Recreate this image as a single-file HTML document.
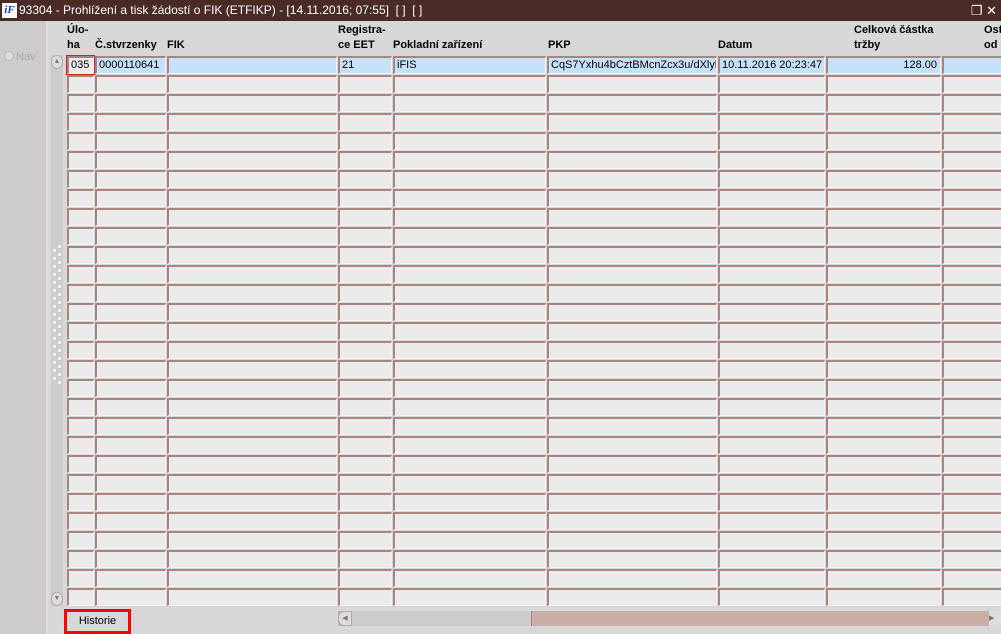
<!DOCTYPE html>
<html><head><meta charset="utf-8"><style>
*{margin:0;padding:0;box-sizing:border-box}
body{width:1001px;height:634px;overflow:hidden;background:#d8d8d8;font-family:"Liberation Sans",Arial,sans-serif;font-size:11px;position:relative}
.tb{position:absolute;left:0;top:0;width:1001px;height:21px;background:#4a2a26;color:#fff;font-size:12px;line-height:21px}
.tb .ic{position:absolute;left:2px;top:3px;width:15px;height:15px;background:#fff;color:#1a3cc8;font:italic bold 11px/15px "Liberation Serif",serif;text-align:center}
.tb .t{position:absolute;left:19px;top:0}
.lp{position:absolute;left:0;top:21px;width:48px;height:613px;background:#cccccc;border-right:2px solid #e8dcda}
.nav{position:absolute;left:4px;top:30px;color:#a8a8a8;font-size:11px}
.nav b{display:inline-block;width:10px;height:10px;border-radius:50%;border:1px solid #b8b8b8;background:#ddd;vertical-align:-1px;margin-right:2px}
.vs{position:absolute;left:51px;top:55px;width:12px;height:551px;background:#cccccc}
.vs .a{position:absolute;left:0;width:12px;height:14px;background:#ddd;border:1px solid #b8a8a4;border-radius:6px;font-size:7px;color:#777;text-align:center;line-height:12px}
.dots{position:absolute;left:2px;top:190px;width:8px;height:140px;background-image:radial-gradient(circle at 1.5px 1.5px,#fff 1.2px,transparent 1.6px),radial-gradient(circle at 1.5px 1.5px,#fff 1.2px,transparent 1.6px);background-size:8px 8px,8px 8px;background-position:0 4px,5px 0;background-repeat:repeat-y}
.h{position:absolute;font-weight:bold;font-size:11px;line-height:15px;color:#000}
.r{position:absolute;left:0;height:18px;width:1001px}
.r i{position:absolute;top:0;height:18px;background:#ebebeb;border-top:2px solid #a8857e;border-left:2px solid #a8857e;border-right:1px solid #f4f4f4;border-bottom:1px solid #f4f4f4;font-style:normal;line-height:15px;padding-left:2px;white-space:nowrap;overflow:hidden}
.r i:nth-child(1){left:67px;width:27px}
.r i:nth-child(2){left:95px;width:71px}
.r i:nth-child(3){left:167px;width:170px}
.r i:nth-child(4){left:338px;width:54px}
.r i:nth-child(5){left:393px;width:153px}
.r i:nth-child(6){left:547px;width:170px}
.r i:nth-child(7){left:718px;width:107px}
.r i:nth-child(8){left:826px;width:115px}
.r i:nth-child(9){left:942px;width:70px}
.s i{background:#c6e2fa}
.s i:nth-child(1){background:#ebebeb;outline:1px solid #d02020}
.hs{position:absolute;left:338px;top:611px;width:663px;height:15px;background:#cbaea8}
.hs .l{position:absolute;left:0;top:0;width:14px;height:15px;background:#ddd;border:1px solid #b8a8a4;border-radius:6px 0 0 6px;font-size:7px;color:#777;line-height:13px;text-align:center}
.hs .th{position:absolute;left:14px;top:0;width:180px;height:15px;background:#cccccc;border-right:1px solid #a8857e}
.hs .rr{position:absolute;right:0;top:0;width:12px;height:15px;background:#ddd;font-size:7px;color:#777;line-height:15px}
.btn{position:absolute;left:64px;top:609px;width:67px;height:25px;border:3px solid #ff0000;background:#d8d8d8;text-align:center;line-height:19px;font-size:11px}
</style></head><body>
<div class="tb"><span class="ic">iF</span><span class="t">93304 - Prohlížení a tisk žádostí o FIK (ETFIKP) - [14.11.2016; 07:55]&nbsp; [ ]&nbsp; [ ]</span><span style="position:absolute;right:4px;top:0;font-size:13px">&#x2750; &#x2715;</span></div>
<div class="lp"><div class="nav"><b></b>Nav</div></div>
<div class="vs"><div class="a" style="top:0">&#9650;</div><div class="dots"></div><div class="a" style="bottom:0">&#9660;</div></div>
<div class="h" style="left:67px;top:23px">Úlo-<br>ha</div>
<div class="h" style="left:95px;top:38px">Č.stvrzenky</div>
<div class="h" style="left:167px;top:38px">FIK</div>
<div class="h" style="left:338px;top:23px">Registra-<br>ce EET</div>
<div class="h" style="left:393px;top:38px">Pokladní zařízení</div>
<div class="h" style="left:548px;top:38px">PKP</div>
<div class="h" style="left:718px;top:38px">Datum</div>
<div class="h" style="left:854px;top:23px">Celková částka<br>tržby</div>
<div class="h" style="left:984px;top:23px">Ost<br>od</div>
<div class="r s" style="top:56px"><i>035</i><i>0000110641</i><i></i><i>21</i><i>iFIS</i><i>CqS7Yxhu4bCztBMcnZcx3u/dXlylI</i><i>10.11.2016 20:23:47</i><i style="text-align:right;padding-right:3px">128.00</i><i></i></div>
<div class="r" style="top:75px"><i></i><i></i><i></i><i></i><i></i><i></i><i></i><i></i><i></i></div>
<div class="r" style="top:94px"><i></i><i></i><i></i><i></i><i></i><i></i><i></i><i></i><i></i></div>
<div class="r" style="top:113px"><i></i><i></i><i></i><i></i><i></i><i></i><i></i><i></i><i></i></div>
<div class="r" style="top:132px"><i></i><i></i><i></i><i></i><i></i><i></i><i></i><i></i><i></i></div>
<div class="r" style="top:151px"><i></i><i></i><i></i><i></i><i></i><i></i><i></i><i></i><i></i></div>
<div class="r" style="top:170px"><i></i><i></i><i></i><i></i><i></i><i></i><i></i><i></i><i></i></div>
<div class="r" style="top:189px"><i></i><i></i><i></i><i></i><i></i><i></i><i></i><i></i><i></i></div>
<div class="r" style="top:208px"><i></i><i></i><i></i><i></i><i></i><i></i><i></i><i></i><i></i></div>
<div class="r" style="top:227px"><i></i><i></i><i></i><i></i><i></i><i></i><i></i><i></i><i></i></div>
<div class="r" style="top:246px"><i></i><i></i><i></i><i></i><i></i><i></i><i></i><i></i><i></i></div>
<div class="r" style="top:265px"><i></i><i></i><i></i><i></i><i></i><i></i><i></i><i></i><i></i></div>
<div class="r" style="top:284px"><i></i><i></i><i></i><i></i><i></i><i></i><i></i><i></i><i></i></div>
<div class="r" style="top:303px"><i></i><i></i><i></i><i></i><i></i><i></i><i></i><i></i><i></i></div>
<div class="r" style="top:322px"><i></i><i></i><i></i><i></i><i></i><i></i><i></i><i></i><i></i></div>
<div class="r" style="top:341px"><i></i><i></i><i></i><i></i><i></i><i></i><i></i><i></i><i></i></div>
<div class="r" style="top:360px"><i></i><i></i><i></i><i></i><i></i><i></i><i></i><i></i><i></i></div>
<div class="r" style="top:379px"><i></i><i></i><i></i><i></i><i></i><i></i><i></i><i></i><i></i></div>
<div class="r" style="top:398px"><i></i><i></i><i></i><i></i><i></i><i></i><i></i><i></i><i></i></div>
<div class="r" style="top:417px"><i></i><i></i><i></i><i></i><i></i><i></i><i></i><i></i><i></i></div>
<div class="r" style="top:436px"><i></i><i></i><i></i><i></i><i></i><i></i><i></i><i></i><i></i></div>
<div class="r" style="top:455px"><i></i><i></i><i></i><i></i><i></i><i></i><i></i><i></i><i></i></div>
<div class="r" style="top:474px"><i></i><i></i><i></i><i></i><i></i><i></i><i></i><i></i><i></i></div>
<div class="r" style="top:493px"><i></i><i></i><i></i><i></i><i></i><i></i><i></i><i></i><i></i></div>
<div class="r" style="top:512px"><i></i><i></i><i></i><i></i><i></i><i></i><i></i><i></i><i></i></div>
<div class="r" style="top:531px"><i></i><i></i><i></i><i></i><i></i><i></i><i></i><i></i><i></i></div>
<div class="r" style="top:550px"><i></i><i></i><i></i><i></i><i></i><i></i><i></i><i></i><i></i></div>
<div class="r" style="top:569px"><i></i><i></i><i></i><i></i><i></i><i></i><i></i><i></i><i></i></div>
<div class="r" style="top:588px"><i></i><i></i><i></i><i></i><i></i><i></i><i></i><i></i><i></i></div>
<div class="hs"><div class="l">&#9664;</div><div class="th"></div><div class="rr">&#9654;</div></div>
<div class="btn">Historie</div>
</body></html>
